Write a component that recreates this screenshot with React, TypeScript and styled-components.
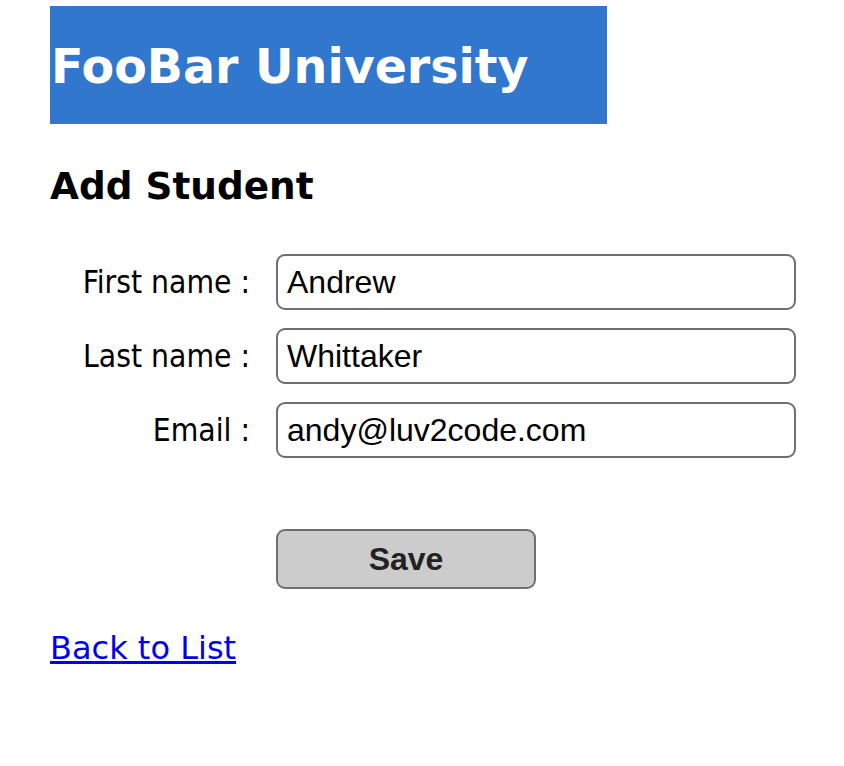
import React from 'react'
import styled, { createGlobalStyle } from 'styled-components'

const GlobalStyle = createGlobalStyle`
  html, body {
    margin: 0;
    padding: 0;
    background: #ffffff;
  }
`

const Page = styled.div`
  display: flex;
  flex-direction: column;
  align-items: flex-start;
  padding: 6px 0 0 50px;
  font-family: 'DejaVu Sans', Verdana, sans-serif;
`

const Banner = styled.header`
  display: flex;
  align-items: center;
  width: 557px;
  height: 118px;
  background: #3077cd;
`

const BannerTitle = styled.h1`
  margin: 4px 0 0 1px;
  font-size: 47.5px;
  line-height: 1;
  font-weight: 700;
  color: #ffffff;
`

const Heading = styled.h3`
  margin: 40px 0 0;
  font-size: 37.4px;
  line-height: 44px;
  font-weight: 700;
  color: #000000;
`

const Form = styled.form`
  display: grid;
  grid-template-columns: 200px 520px;
  column-gap: 26px;
  row-gap: 18px;
  align-items: center;
  margin-top: 46px;
`

const Label = styled.label`
  text-align: right;
  font-family: 'DejaVu Sans Condensed', Tahoma, sans-serif;
  font-size: 31.5px;
  color: #000000;
`

const Input = styled.input`
  box-sizing: border-box;
  width: 520px;
  height: 56px;
  padding: 0 9px;
  border: 2px solid #6f6f6f;
  border-radius: 9px;
  font-family: 'Liberation Sans', Helvetica, Arial, sans-serif;
  font-size: 32px;
  color: #000000;
  background: #ffffff;
  outline: none;
`

const ButtonRow = styled.div`
  grid-column: 2;
  margin-top: 53px;
`

const SaveButton = styled.button`
  box-sizing: border-box;
  width: 260px;
  height: 60px;
  border: 2px solid #6f6f6f;
  border-radius: 9px;
  background: #cccccc;
  font-family: 'Liberation Sans', Helvetica, Arial, sans-serif;
  font-size: 32px;
  font-weight: 700;
  color: #222222;
`

const BackLink = styled.a`
  margin-top: 40px;
  font-size: 32px;
  line-height: 38px;
  color: #0000ee;
  text-decoration: underline;
`

const fields = [
  { id: 'firstName', label: 'First name :', value: 'Andrew' },
  { id: 'lastName', label: 'Last name :', value: 'Whittaker' },
  { id: 'email', label: 'Email :', value: 'andy@luv2code.com' },
]

const App: React.FC = () => {
  return (
    <>
      <GlobalStyle />
      <Page>
        <Banner>
          <BannerTitle>FooBar University</BannerTitle>
        </Banner>
        <Heading>Add Student</Heading>
        <Form onSubmit={(e) => e.preventDefault()}>
          {fields.map((field) => (
            <React.Fragment key={field.id}>
              <Label htmlFor={field.id}>{field.label}</Label>
              <Input id={field.id} type="text" defaultValue={field.value} />
            </React.Fragment>
          ))}
          <ButtonRow>
            <SaveButton type="submit">Save</SaveButton>
          </ButtonRow>
        </Form>
        <BackLink href="#">Back to List</BackLink>
      </Page>
    </>
  )
}

export default App
